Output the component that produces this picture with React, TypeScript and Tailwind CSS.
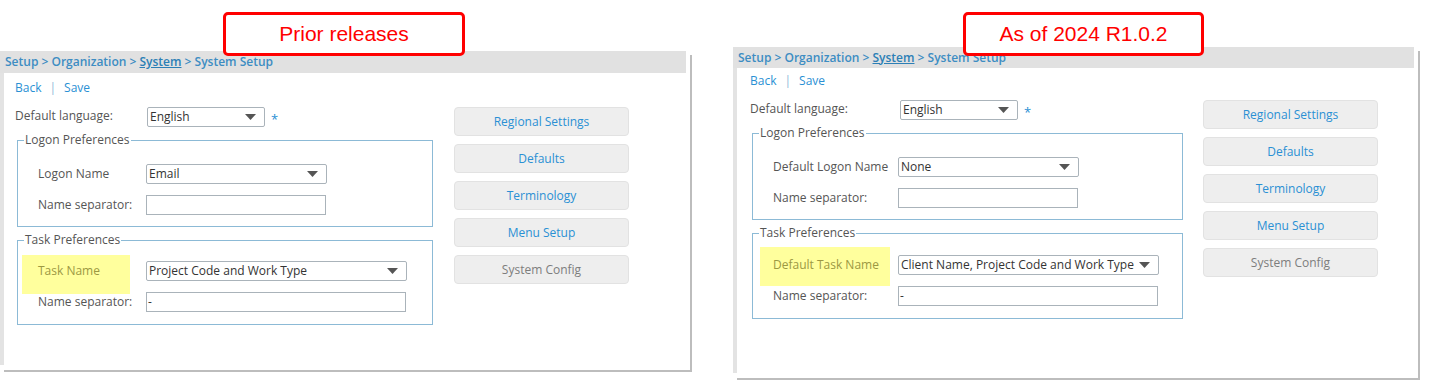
import React from "react"

interface PanelConfig {
  w: number
  h: number
  headerH: string
  bodyPad: string
  langLabelW: string
  formW: string
  fieldsetW: string
  rowLabelW: string
  logonLabel: string
  logonValue: string
  taskLabel: string
  taskValue: string
  buttonsMl: string
  taskRowTop: string
  hlBox: string
}

const Arrow = () => (
  <svg width="11" height="6" viewBox="0 0 11 6" className="shrink-0">
    <path d="M0 0 H11 L5.5 6 Z" fill="#555" />
  </svg>
)

const Select = ({ value, w }: { value: string; w: string }) => (
  <div
    className={`${w} h-[20px] border border-[#aab3ba] rounded-[2px] bg-white flex items-center justify-between pl-[2px] pr-[8px] text-[12px] text-[#333] leading-none`}
  >
    <span>{value}</span>
    <Arrow />
  </div>
)

const Input = ({ value, w }: { value: string; w: string }) => (
  <div className={`${w} h-[20px] border border-[#aab3ba] bg-white flex items-center pl-[1px] text-[12px] text-[#333] leading-none`}>
    {value}
  </div>
)

const Breadcrumb = () => (
  <div className="text-[12px] font-semibold text-[#3d8dc3] leading-none whitespace-nowrap">
    Setup &gt; Organization &gt; <span className="underline text-[#2c7fb6]">System</span> &gt; System Setup
  </div>
)

const NavButton = ({ label, muted }: { label: string; muted?: boolean }) => (
  <div
    className={`w-[175px] h-[29px] rounded-[4px] border border-[#e2e2e2] bg-[#eeeeee] flex items-center justify-center text-[12px] ${
      muted ? "text-[#7d7d7d]" : "text-[#2a90d4]"
    }`}
  >
    {label}
  </div>
)

const Panel = ({ c }: { c: PanelConfig }) => (
  <div
    className="bg-white flex flex-col shadow-[3px_3px_0_-1px_#bdbdbd]"
    style={{ width: c.w, height: c.h }}
  >
    <div className={`${c.headerH} bg-[#e1e1e1] mr-[4px] flex items-center pl-[5px]`}>
      <Breadcrumb />
    </div>
    <div className={`flex-1 border-l-[4px] border-[#e3e3e3] mb-[5px] ${c.bodyPad}`}>
      <div className="flex items-center text-[12px] leading-[16px] text-[#2a90d4]">
        <span>Back</span>
        <span className="mx-[8px] text-[#8db9d8]">|</span>
        <span>Save</span>
      </div>
      <div className="flex items-start mt-[11px]">
        <div className={c.formW}>
          <div className="flex items-center">
            <span className={`${c.langLabelW} text-[12px] text-[#555] -mt-[3px]`}>Default language:</span>
            <Select value="English" w="w-[118px]" />
            <span className="ml-[6px] text-[13px] text-[#2a90d4] leading-none mt-[4px]">*</span>
          </div>

          <fieldset className={`mt-[5px] ml-[2px] ${c.fieldsetW} border border-[#8cbad6] pb-[11px]`}>
            <legend className="ml-[6px] px-[1px] text-[12px] leading-[16px] text-[#555]">Logon Preferences</legend>
            <div className="flex items-center mt-[16px] pl-[20px]">
              <span className={`${c.rowLabelW} text-[12px] text-[#555]`}>{c.logonLabel}</span>
              <Select value={c.logonValue} w="w-[181px]" />
            </div>
            <div className="flex items-center mt-[11px] pl-[20px]">
              <span className={`${c.rowLabelW} text-[12px] text-[#555]`}>Name separator:</span>
              <Input value="" w="w-[180px]" />
            </div>
          </fieldset>

          <fieldset className={`mt-[5px] ml-[2px] ${c.fieldsetW} border border-[#8cbad6] pb-[12px]`}>
            <legend className="ml-[6px] px-[1px] text-[12px] leading-[16px] text-[#555]">Task Preferences</legend>
            <div className={`flex items-center ${c.taskRowTop} pl-[20px]`}>
              <span className={`relative ${c.rowLabelW} text-[12px] text-[#9c9843]`}>
                <span className={`absolute ${c.hlBox} bg-[#ffff9d]`} />
                <span className="relative">{c.taskLabel}</span>
              </span>
              <Select value={c.taskValue} w="w-[261px]" />
            </div>
            <div className="flex items-center mt-[11px] pl-[20px]">
              <span className={`${c.rowLabelW} text-[12px] text-[#555]`}>Name separator:</span>
              <Input value="-" w="w-[260px]" />
            </div>
          </fieldset>
        </div>

        <div className={`${c.buttonsMl} flex flex-col gap-[8px]`}>
          <NavButton label="Regional Settings" />
          <NavButton label="Defaults" />
          <NavButton label="Terminology" />
          <NavButton label="Menu Setup" />
          <NavButton label="System Config" muted />
        </div>
      </div>
    </div>
  </div>
)

const prior: PanelConfig = {
  w: 690,
  h: 319,
  headerH: "h-[22px]",
  bodyPad: "pt-[7px] pl-[11px]",
  langLabelW: "w-[132px]",
  formW: "w-[418px]",
  fieldsetW: "w-[416px]",
  rowLabelW: "w-[108px]",
  logonLabel: "Logon Name",
  logonValue: "Email",
  taskLabel: "Task Name",
  taskValue: "Project Code and Work Type",
  buttonsMl: "ml-[21px]",
  taskRowTop: "mt-[13px]",
  hlBox: "-left-[16px] -top-[7px] w-[108px] h-[39px]",
}

const current: PanelConfig = {
  w: 685,
  h: 331,
  headerH: "h-[21px]",
  bodyPad: "pt-[5px] pl-[13px]",
  langLabelW: "w-[150px]",
  formW: "w-[433px]",
  fieldsetW: "w-[431px]",
  rowLabelW: "w-[125px]",
  logonLabel: "Default Logon Name",
  logonValue: "None",
  taskLabel: "Default Task Name",
  taskValue: "Client Name, Project Code and Work Type",
  buttonsMl: "ml-[20px]",
  taskRowTop: "mt-[14px]",
  hlBox: "-left-[13px] -top-[9px] w-[130px] h-[39px]",
}

const Callout = ({ text, pos }: { text: string; pos: string }) => (
  <div
    className={`absolute ${pos} top-[12px] h-[44px] border-[3px] border-[#ff0000] rounded-[5px] bg-white flex items-center justify-center text-[21px] text-[#ff0000] font-['Liberation_Sans',Arial,sans-serif]`}
  >
    {text}
  </div>
)

export default function App() {
  return (
    <div className="relative w-[1431px] h-[391px] bg-white overflow-hidden font-['Open_Sans',sans-serif]">
      <div className="flex items-start pt-[47px]">
        <div className="mt-[4px]">
          <Panel c={prior} />
        </div>
        <div className="ml-[43px]">
          <Panel c={current} />
        </div>
      </div>
      <Callout text="Prior releases" pos="left-[223px] w-[242px]" />
      <Callout text="As of 2024 R1.0.2" pos="left-[963px] w-[241px]" />
    </div>
  )
}
